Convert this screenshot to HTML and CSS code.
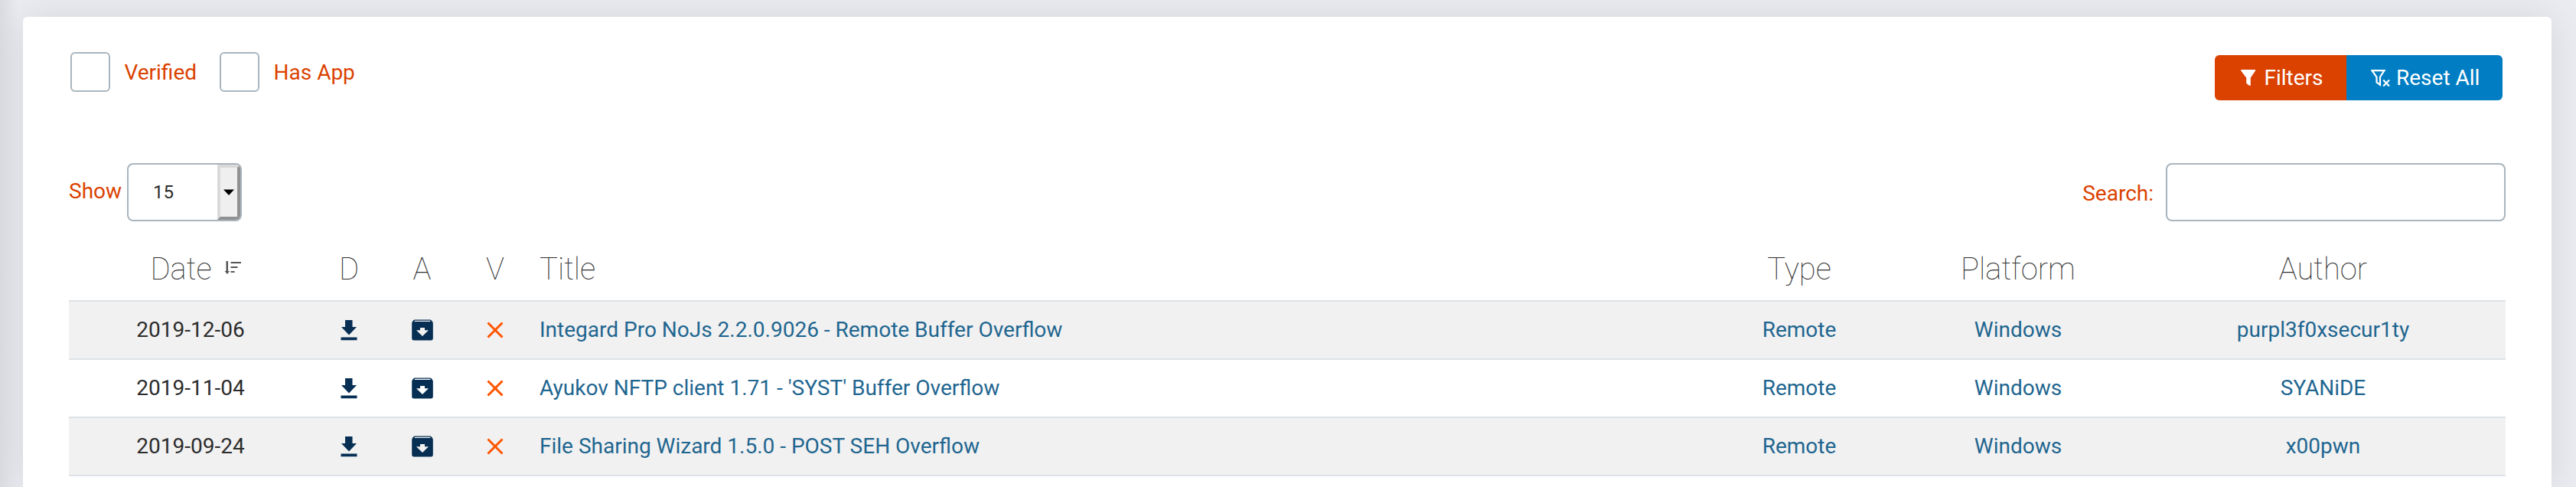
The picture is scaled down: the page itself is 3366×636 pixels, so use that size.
FILE: index.html
```html
<!DOCTYPE html>
<html lang="en">
<head>
<meta charset="utf-8">
<title>Exploits</title>
<link rel="stylesheet" href="styles.css">
</head>
<body>
<svg class="defs" width="0" height="0" aria-hidden="true">
  <symbol id="download" viewBox="0 0 22 27"><path d="M6 0h9.500v9h5.500L11 19.500 1 9h5zM.5 22.600h21v3.600H.5z"/></symbol>
  <symbol id="archive" viewBox="0 0 28 28"><path fill-rule="evenodd" d="M4 .5h20q1 0 1.700.8l1.300 1.700q.8 1 .8 2.200v19.600a2.600 2.600 0 0 1-2.600 2.600H2.800A2.600 2.600 0 0 1 .2 24.800V5.200Q.2 4 1 3l1.300-1.700Q3 .5 4 .5zM3.300 3h21.400l-.9-1.200H4.200zM11 11h6v3.200h5L14 22l-8-7.800h5z"/></symbol>
  <symbol id="cross" viewBox="0 0 22 22"><path d="M1.500 1.500l19 19M20.500 1.500l-19 19" fill="none" stroke="currentColor" stroke-width="3"/></symbol>
</svg>
<main class="card">
  <div class="toolbar">
    <div class="checks">
      <label class="check"><span class="box"></span>Verified</label>
      <label class="check"><span class="box"></span>Has App</label>
    </div>
    <div class="buttons">
      <button class="btn btn-filter"><svg class="funnel" viewBox="0 0 20 22"><path d="M.5 0h18.300l.4 1.200-6.400 9.300V21l-2.600-.8-3-2.700v-7L.1 1.200z"/></svg>Filters</button>
      <button class="btn btn-reset"><svg class="funnel-x" viewBox="0 0 26 22"><path d="M1.500 1.200h16L12 9.500V19.800l-4.500-3.300v-7L1.500 1.200zM16.200 13.500l7.800 8M24 13.500l-7.800 8" fill="none" stroke="currentColor" stroke-width="2.200"/></svg>Reset All</button>
    </div>
  </div>
  <div class="controls">
    <label class="show"><span class="show-text">Show</span><span class="select"><span class="value">15</span><span class="arrow"><svg viewBox="0 0 14 8"><path d="M0 .5h14L7 8z"/></svg></span></span></label>
    <label class="search"><span class="search-text">Search:</span><input type="text"></label>
  </div>
  <table class="list">
    <colgroup><col class="c-date"><col class="c-d"><col class="c-a"><col class="c-v"><col class="c-title"><col class="c-type"><col class="c-platform"><col class="c-author"></colgroup>
    <thead><tr><th class="date-head">Date<svg class="sort" viewBox="0 0 22 17"><path d="M2.500 0h2.500v13H7L4 17 .5 13h2zM8.500 1H22v2H8.500zM8.500 7h9v2h-9zM8.500 13H13.500v2h-5z"/></svg></th><th>D</th><th>A</th><th>V</th><th class="title">Title</th><th>Type</th><th>Platform</th><th>Author</th></tr></thead>
    <tbody>
      <tr><td>2019-12-06</td><td><svg class="dl"><use href="#download"/></svg></td><td><svg class="ar"><use href="#archive"/></svg></td><td><svg class="cr"><use href="#cross"/></svg></td><td class="title"><a>Integard Pro NoJs 2.2.0.9026 - Remote Buffer Overflow</a></td><td><a>Remote</a></td><td><a>Windows</a></td><td><a>purpl3f0xsecur1ty</a></td></tr>
      <tr><td>2019-11-04</td><td><svg class="dl"><use href="#download"/></svg></td><td><svg class="ar"><use href="#archive"/></svg></td><td><svg class="cr"><use href="#cross"/></svg></td><td class="title"><a>Ayukov NFTP client 1.71 - 'SYST' Buffer Overflow</a></td><td><a>Remote</a></td><td><a>Windows</a></td><td><a>SYANiDE</a></td></tr>
      <tr><td>2019-09-24</td><td><svg class="dl"><use href="#download"/></svg></td><td><svg class="ar"><use href="#archive"/></svg></td><td><svg class="cr"><use href="#cross"/></svg></td><td class="title"><a>File Sharing Wizard 1.5.0 - POST SEH Overflow</a></td><td><a>Remote</a></td><td><a>Windows</a></td><td><a>x00pwn</a></td></tr>
    </tbody>
  </table>
</main>
</body>
</html>
```
FILE: styles.css
```css
* { box-sizing: border-box; }
body {
  margin: 0;
  height: 636px;
  overflow: hidden;
  padding: 22px 32px 0 30px;
  background: linear-gradient(90deg, rgba(0, 0, 0, .07), transparent 24px) #ebecf1;
  color: #2c2c2c;
  font: 28px/42px Roboto, sans-serif;
}
.defs { display: block; height: 0; }
svg { fill: currentColor; display: block; }
.card {
  height: 614px;
  padding: 0 60px;
  background: #fff;
  border-radius: 6px 6px 0 0;
  box-shadow: 0 2px 50px rgba(0, 0, 0, .1);
}
.toolbar {
  display: flex;
  justify-content: space-between;
  height: 191px;
  padding: 46px 4px 0 2px;
}
.checks { display: flex; gap: 30px; }
.check { display: flex; height: 52px; align-items: center; gap: 18.5px; color: #db4200; line-height: 43px; }
.box { width: 52px; height: 52px; border: 2px solid #a9b5be; border-radius: 6px; }
.buttons { display: flex; height: 59px; margin-top: 4px; }
.btn {
  display: flex;
  align-items: center;
  border: 0;
  color: #fff;
  font: 28px/42px Roboto, sans-serif;
}
.btn-filter { width: 172px; padding: 0 0 0 34px; background: #db4200; border-radius: 6px 0 0 6px; }
.btn-reset { width: 204px; padding: 0 0 0 32px; background: #007dc3; border-radius: 0 6px 6px 0; }
.funnel { width: 20px; height: 22px; margin-right: 10.500px; }
.funnel-x { width: 26px; height: 22px; margin-right: 7px; }
.controls { display: flex; justify-content: space-between; height: 76px; color: #db4200; }
.show, .search { display: flex; align-items: center; }
.show { gap: 7px; }
.show-text { padding-bottom: 3px; }
.search { gap: 16px; }
.search-text { padding-top: 3px; }
.search input { width: 444px; height: 76px; border: 2px solid #a9b5be; border-radius: 8px; background: #fff; }
.select {
  display: flex;
  justify-content: space-between;
  width: 150px;
  height: 76px;
  overflow: hidden;
  border: 2px solid #a9b5be;
  border-radius: 8px;
  color: #2c2c2c;
  font-size: 24px;
}
.value { padding: 15px 0 0 32px; }
.arrow {
  display: grid;
  place-items: center;
  width: 30px;
  border: 4px solid;
  border-color: #d9d9d9 #919191 #919191 #d9d9d9;
  background: #efefef;
  color: #000;
}
.arrow svg { width: 14px; height: 8px; }
.list { width: 3184px; table-layout: fixed; border-collapse: separate; border-spacing: 0; }
.c-date { width: 318px; }
.c-d, .c-v { width: 96px; }
.c-a { width: 95px; }
.c-title { width: 1530px; }
.c-type { width: 252px; }
.c-platform { width: 320px; }
.c-author { width: 477px; }
th { height: 103px; padding: 23px 0 0; font-size: 40px; line-height: 60px; font-weight: 100; text-align: center; }
th.date-head { padding-left: 13px; }
td { height: 76px; padding: 0; border-top: 2px solid #dee2e6; text-align: center; }
tbody tr:nth-child(odd) td { background: #f1f1f1; }
tbody tr:last-child td { height: 78px; border-bottom: 2px solid #dee2e6; }
th.title, td.title { padding-left: 10px; text-align: left; }
a { color: #1f6690; }
.sort { display: inline-block; width: 22px; height: 17px; margin-left: 16px; vertical-align: 7px; color: #555; }
.dl, .ar, .cr { margin: 0 auto; color: #072f54; }
.dl { width: 22px; height: 27px; }
.ar { width: 28px; height: 28px; }
.cr { width: 22px; height: 22px; color: #ff5500; }
```
